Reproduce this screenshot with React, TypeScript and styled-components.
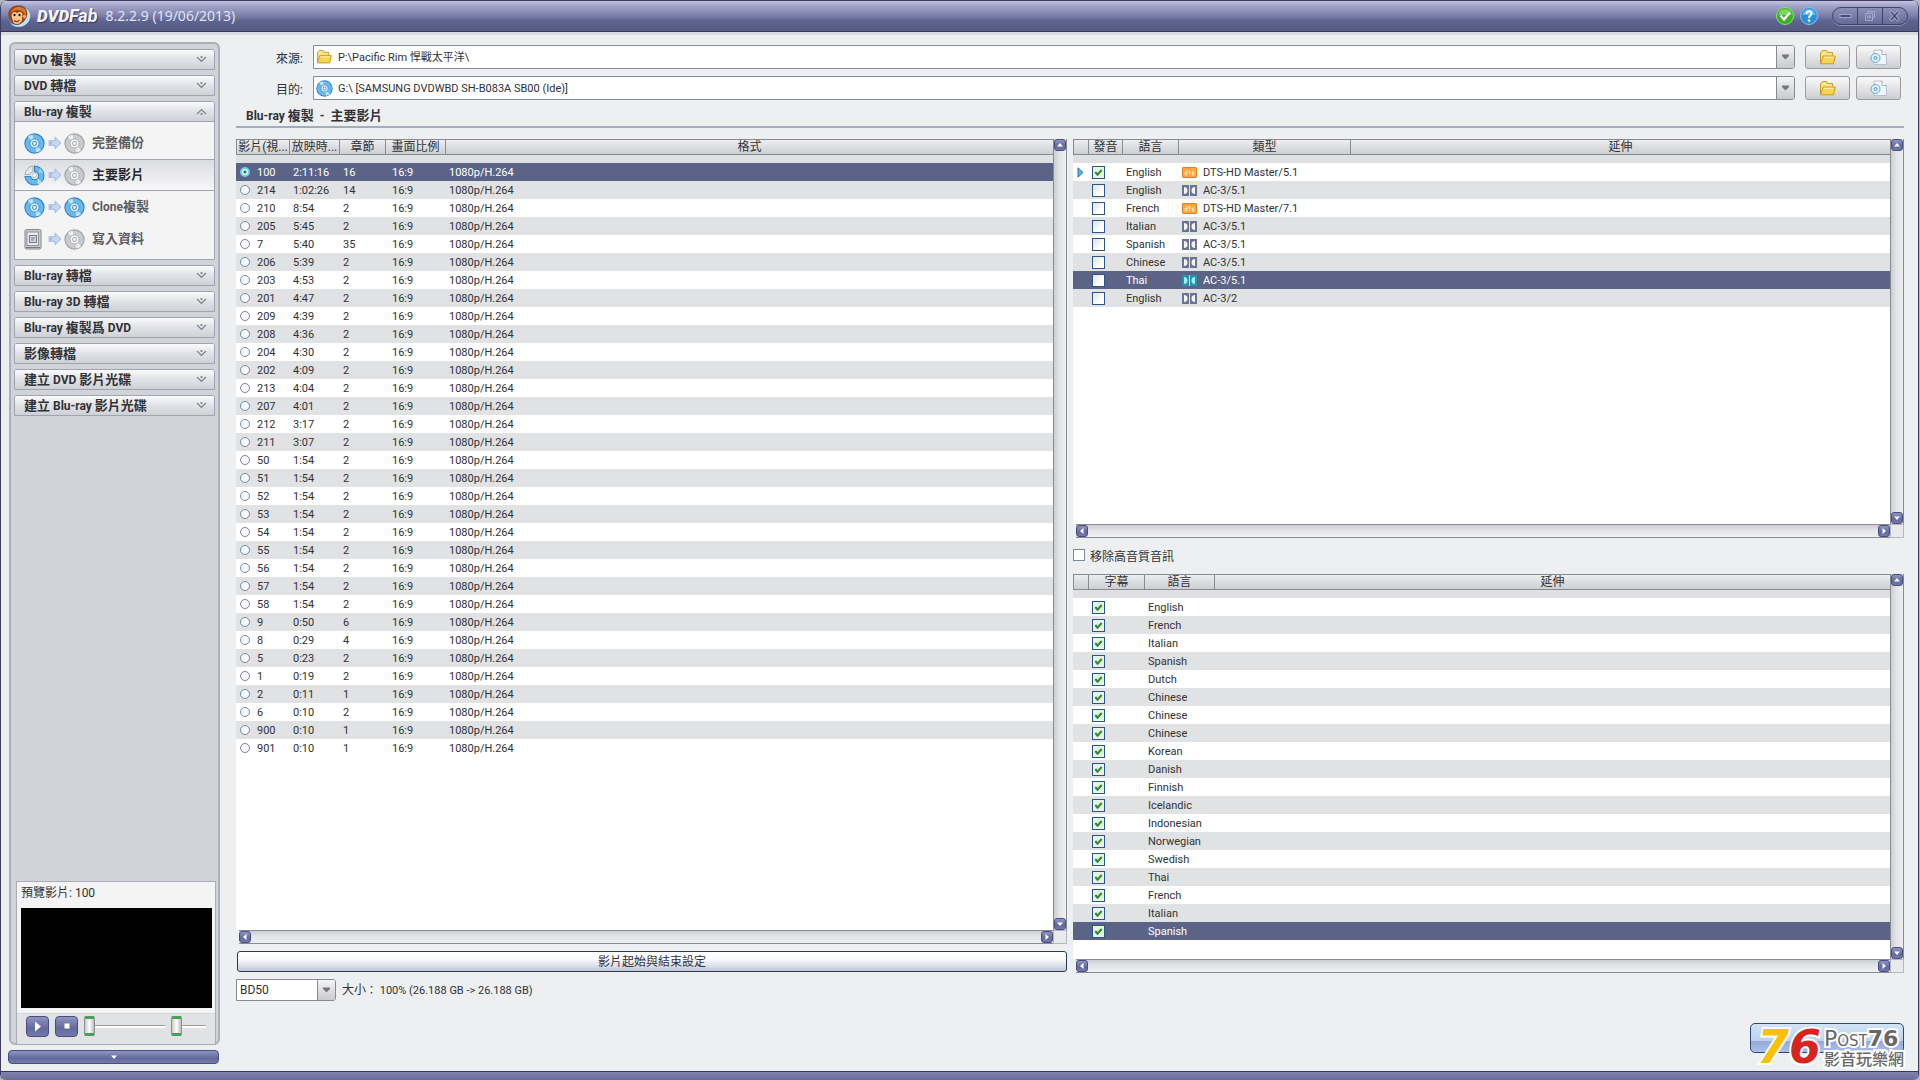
import React, { useState } from 'react';
import styled, { createGlobalStyle, css } from 'styled-components';

const latin = `Roboto, 'Noto Sans CJK TC', sans-serif`;
const line = '#868b92';
const selected = '#5b6487';

const Global = createGlobalStyle`
  *, *::before, *::after { box-sizing: border-box; }
  body { margin: 0; background: #b4b6c4; font-family: ${latin}; font-size: 11px; color: #303236; }
  button, select, input { font: inherit; color: inherit; margin: 0; }
  button { padding: 0; cursor: pointer; }
`;

const Window = styled.div`
  min-height: 100vh;
  margin-right: 1px;
  display: flex;
  flex-direction: column;
  background: #edeff1;
  border: solid #3c3d60;
  border-width: 0 1px;
  border-radius: 8px 8px 6px 6px;
  overflow: hidden;
`;

/* ---------- title bar ---------- */

const TitleBar = styled.header`
  display: flex;
  align-items: center;
  height: 32px;
  padding: 0 10px 0 6px;
  border-top: 1px solid #3c3d60;
  border-bottom: 1px solid #35375b;
  background: linear-gradient(#c3c3e0 0, #a3a3c9 5px, #7f82ac 14px, #5d6390 20px, #555c83 28px, #595e88 31px);
`;

const Brand = styled.div`
  display: flex;
  align-items: baseline;
  margin-left: 6px;
  color: #f4f5fb;
  font: italic 900 17px/24px Roboto, sans-serif;
  text-shadow: 1px 1px 1px #30355c;
`;

const BrandTail = styled.span`
  font-size: 18px;
  font-weight: 700;
`;

const Version = styled.span`
  flex: 1;
  margin-left: 8px;
  color: #dfe4f8;
  font: 14px/24px 'Noto Sans', sans-serif;
`;

const RoundButton = styled.button`
  display: flex;
  width: 18px;
  height: 18px;
  margin-right: 6px;
  border: 0;
  background: none;
`;

const WindowButtons = styled.div`
  display: flex;
  width: 76px;
  height: 18px;
  margin-left: 8px;
  border: 1px solid #3d4370;
  border-radius: 9px;
  overflow: hidden;
  background: linear-gradient(#8d90b6, #656b96);
  box-shadow: 0 1px 0 #8b90b8;
`;

const WindowButton = styled.button`
  flex: 1;
  display: grid;
  place-items: center;
  border: 0;
  background: none;
  & + & { border-left: 1px solid #3d4370; }
`;

/* ---------- sidebar ---------- */

const Body = styled.div`
  flex: 1;
  display: flex;
  gap: 16px;
  padding: 0 14px 0 8px;
  border-top: 3px solid #d9dbe0;
`;

const Aside = styled.aside`
  display: flex;
  flex-direction: column;
  width: 211px;
  padding: 7px 0;
`;

const SidePanel = styled.nav`
  flex: 1;
  display: flex;
  flex-direction: column;
  gap: 5px;
  padding: 5px 2px 0 3px;
  background: #d0d4d8;
  border: 2px solid #abb1b7;
  border-radius: 6px;
`;

const Section = styled.section`
  border: 1px solid #9ea5b0;
  border-radius: 3px 3px 0 0;
  background: #f4f4f5;
  margin-right: 1px;
`;

const SectionHeader = styled.button<{ $open?: boolean }>`
  display: flex;
  align-items: center;
  justify-content: space-between;
  width: 100%;
  height: ${p => (p.$open ? 20 : 19)}px;
  padding: 0 7px 0 9px;
  border: 0;
  border-bottom: ${p => (p.$open ? '1px solid #9ea5b0' : '0')};
  border-radius: 2px 2px 0 0;
  background: linear-gradient(#fbfbfc, #e3e4e8 45%, #cfd1d7);
  font-weight: bold;
  font-size: 12px;
  line-height: 18px;
`;

const Cjk = styled.span<{ $size: number }>`
  font-size: ${p => p.$size}px;
`;

const Items = styled.ul`
  margin: 0;
  padding: 5px 0 4px;
  list-style: none;
`;

const Item = styled.button<{ $active?: boolean }>`
  display: flex;
  align-items: center;
  width: 100%;
  height: 32px;
  padding: 0 9px;
  border: solid transparent;
  border-width: 1px 0;
  background: none;
  color: #5a5c60;
  font-weight: bold;
  font-size: 12px;
  line-height: 18px;
  ${p => p.$active && css`
    color: #26282c;
    border-color: #9ea5b0;
    background: linear-gradient(#dcdde1, #f7f7f8);
  `}
  svg { flex: none; }
`;

const ItemText = styled.span`
  margin-left: 7px;
`;

const Preview = styled.section`
  margin: auto 0 -2px 2px;
  border: 1px solid #a9aeb6;
  background: #f4f4f5;
`;

const PreviewTitle = styled.h2`
  margin: 0;
  padding: 2px 4px 5px;
  font-size: 12px;
  font-weight: normal;
  line-height: 19px;
`;

const Screen = styled.div`
  height: 100px;
  margin: 0 3px 5px 4px;
  background: #000;
`;

const Transport = styled.div`
  display: flex;
  align-items: center;
  gap: 6px;
  height: 31px;
  padding: 0 9px 6px;
  border-top: 1px solid #d3d6da;
  background: #e1e2e4;
`;

const blueFace = css`
  border: 1px solid #474d80;
  background: linear-gradient(#8e95c2, #626a9c 60%, #747bab);
`;

const PlayButton = styled.button`
  ${blueFace}
  flex: none;
  display: grid;
  place-items: center;
  width: 23px;
  height: 21px;
  border-radius: 4px;
`;

const Slider = styled.input<{ $w: number }>`
  appearance: none;
  flex: 0 1 ${p => p.$w}px;
  min-width: 0;
  height: 20px;
  background: linear-gradient(#a59c90, #a59c90) 0 9px / 100% 1px no-repeat,
    linear-gradient(#fff, #fff) 0 10px / 100% 2px no-repeat;
  &::-webkit-slider-thumb {
    appearance: none;
    width: 11px;
    height: 20px;
    border: 1px solid #8c9094;
    border-top: 3px solid #46a05c;
    border-bottom: 3px solid #46a05c;
    border-radius: 2px;
    background: linear-gradient(90deg, #c9cacc, #fff 50%, #b9bbbe);
  }
`;

const CollapseBar = styled.button`
  ${blueFace}
  display: grid;
  place-items: center;
  height: 14px;
  margin: 5px 1px 0 -1px;
  border-radius: 4px;
`;

/* ---------- main ---------- */

const Main = styled.main`
  flex: 1;
  min-width: 0;
  display: flex;
  flex-direction: column;
  padding: 10px 0 18px;
`;

const PathRow = styled.div`
  display: flex;
  align-items: center;
  height: 24px;
  margin-bottom: 7px;
  padding-right: 3px;
`;

const PathLabel = styled.label`
  width: 67px;
  margin-right: 10px;
  text-align: right;
  font-size: 12px;
`;

const Combo = styled.div<{ $w?: number }>`
  ${p => (p.$w ? css`width: ${p.$w}px; height: 22px;` : css`flex: 1; height: 24px;`)}
  display: grid;
  grid-template-columns: auto 1fr 18px;
  align-items: stretch;
  border: 1px solid ${line};
  border-radius: 0 3px 3px 0;
  background: #fff;
  > svg { grid-area: 1 / 1; align-self: center; margin-left: 2px; pointer-events: none; z-index: 1; }
`;

const Select = styled.select<{ $icon?: boolean }>`
  appearance: none;
  grid-area: 1 / 1 / 2 / 4;
  width: 100%;
  min-width: 0;
  padding: 0 20px 0 ${p => (p.$icon ? 24 : 3)}px;
  border: 0;
  background: none;
  font-size: ${p => (p.$icon ? 11 : 12)}px;
  z-index: 1;
`;

const ComboArrow = styled.span`
  grid-area: 1 / 3;
  display: grid;
  place-items: center;
  border-left: 1px solid ${line};
  border-radius: 0 2px 2px 0;
  background: linear-gradient(#f4f4f5, #c9cacd);
`;

const ToolButton = styled.button`
  display: grid;
  place-items: center;
  width: 45px;
  height: 24px;
  margin-left: 6px;
  border: 1px solid #989ba0;
  border-radius: 3px;
  background: linear-gradient(#fafafa, #e4e4e6 50%, #cdced1);
  ${Combo} + & { margin-left: 10px; }
`;

const Heading = styled.h1`
  margin: -2px 0 11px;
  padding-left: 10px;
  height: 23px;
  border-bottom: 2px solid #9fadbd;
  font-size: 12px;
  line-height: 21px;
  white-space: pre;
`;

const Lists = styled.div`
  flex: 1;
  display: grid;
  grid-template-columns: 1fr 1fr;
  gap: 6px;
`;

const Column = styled.div`
  display: flex;
  flex-direction: column;
  min-width: 0;
`;

const Panel = styled.div`
  flex: 1 1 0;
  display: grid;
  grid-template: minmax(min-content, 1fr) 14px / minmax(0, 1fr) 14px;
`;

const Sheet = styled.div`
  background: #fff;
`;

const VBar = styled.div`
  display: flex;
  flex-direction: column;
  justify-content: space-between;
  border: solid ${line};
  border-width: 0 1px;
  background: linear-gradient(90deg, #cdced3, #e3e4e7 45%, #f0f0f2);
`;

const HBar = styled.div`
  display: flex;
  justify-content: space-between;
  margin-left: 3px;
  border: solid ${line};
  border-width: 1px 0;
  background: linear-gradient(#cdced3, #e3e4e7 45%, #f0f0f2);
`;

const Corner = styled.div`
  border: 1px solid #b5b8be;
  background: #e9eaed;
`;

const ScrollButton = styled.button`
  ${blueFace}
  flex: none;
  display: grid;
  place-items: center;
  width: 12px;
  height: 12px;
  border-radius: 3px;
`;

const Table = styled.table`
  width: 100%;
  table-layout: fixed;
  border-collapse: separate;
  border-spacing: 0;
  line-height: 16px;
`;

const Th = styled.th`
  height: 16px;
  padding: 0 1px;
  white-space: nowrap;
  border: solid ${line};
  border-width: 1px 1px 1px 0;
  background: linear-gradient(#efeff1, #dcdde0 50%, #cfd0d4);
  font-size: 12px;
  font-weight: normal;
  line-height: 14px;
  &:first-child { border-left-width: 1px; }
  &:last-child { border-right-width: 0; }
`;

const Gap = styled.td`
  height: 8px;
  padding: 0;
  background: #dfe0e3;
`;

const Row = styled.tr<{ $on?: boolean }>`
  height: 18px;
  &:nth-child(even) { background: #e1e2e3; }
  ${p => p.$on && css`&&& { background: ${selected}; color: #fff; }`}
`;

const Td = styled.td`
  height: 18px;
  padding: 2px 0 0 3px;
  white-space: nowrap;
`;

const RatioTd = styled(Td)`
  padding-left: 6px;
`;

const Flex = styled.span`
  display: flex;
  align-items: center;
  height: 16px;
  > svg, > input { margin-bottom: 2px; }
`;

const Radio = styled.input`
  appearance: none;
  flex: none;
  width: 10px;
  height: 10px;
  margin: 0 7px 0 1px;
  border: 1px solid #76879a;
  border-radius: 50%;
  background: #f8fcff;
  &:checked {
    border: 2px solid #62d3e8;
    background: radial-gradient(#37657f 0 1px, #e4fbff 2px);
  }
`;

const tick = `url("data:image/svg+xml,%3Csvg xmlns='http://www.w3.org/2000/svg' viewBox='0 0 11 11'%3E%3Cpath d='M2.3 5l2.2 2.600L8.700 3' fill='none' stroke='%232f8a2a' stroke-width='2.1'/%3E%3C/svg%3E")`;

const Check = styled.input<{ $soft?: boolean }>`
  appearance: none;
  display: block;
  flex: none;
  width: ${p => (p.$soft ? 12 : 13)}px;
  height: ${p => (p.$soft ? 12 : 13)}px;
  border: 1px solid ${p => (p.$soft ? '#7c899a' : '#2c5486')};
  background: ${p => (p.$soft ? '#fff' : 'linear-gradient(135deg, #dfe3e4, #fff 70%)')};
  &:checked { background: ${tick}, #e6f6e6; }
  ${Td} > & { margin-bottom: 1px; }
`;

const KindText = styled.span`
  margin-left: 6px;
`;

const Strip = styled.label`
  display: flex;
  align-items: center;
  gap: 5px;
  height: 36px;
  padding-bottom: 2px;
  font-size: 12px;
`;

const RangeButton = styled.button`
  height: 21px;
  margin: 7px 0 1px 1px;
  border: 1px solid #2b3a52;
  border-radius: 3px;
  background: linear-gradient(#fff 0, #fbfbfe 35%, #e4e5f0 65%, #c0c6de);
  font-size: 12px;
  line-height: 18px;
`;

const Footer = styled.footer`
  display: flex;
  align-items: flex-start;
  gap: 6px;
  height: 74px;
  margin-top: 6px;
`;

const Size = styled.span`
  flex: 1;
  line-height: 22px;
`;

const StartWrap = styled.div`
  position: relative;
  align-self: flex-end;
`;

const Start = styled.button`
  display: block;
  width: 154px;
  height: 30px;
  border: 1px solid #27497f;
  border-radius: 5px;
  background: linear-gradient(#d2e3f5 0, #bcd2ee 60%, #97a9d8 62%, #a9c0e6);
`;

const Stamp = styled.div`
  position: absolute;
  right: 0;
  top: 5px;
  display: flex;
  align-items: flex-start;
  gap: 3px;
  pointer-events: none;
  white-space: nowrap;
`;

const outline = css`
  -webkit-text-stroke: 4px #fff;
  paint-order: stroke fill;
`;

const Digits = styled.div`
  ${outline}
  color: #d9231f;
  font: italic bold 46px/38px 'DejaVu Sans', sans-serif;
`;

const Gold = styled.span`
  color: #fbc000;
`;

const StampWords = styled.div`
  ${outline}
  color: #686868;
  font: 22px/21px 'DejaVu Sans', sans-serif;
  font-variant: small-caps;
`;

const StampCjk = styled.div`
  font: 500 16px/18px 'Noto Sans CJK TC', sans-serif;
`;

const BottomBar = styled.div`
  height: 9px;
  border-top: 1px solid #35375b;
  background: linear-gradient(#8083ad, #666b98);
`;

/* ---------- drawings ---------- */

const Monkey = () => (
  <svg width="24" height="24" viewBox="0 0 24 24" aria-hidden="true">
    <circle cx="12" cy="12" r="11" fill="#3f9fdc" />
    <path d="M3 19c5 3 13 2 16-5 1.500-3.500 1-7-.5-10C22 6 24 10 23 14c-2 9-14 12-20 5z" fill="#b9e4fb" />
    <path d="M5 19C1 16 0 9 3 5s11-5 15-1 2 9 0 12-6 5-8 5-4-1-5-2z" fill="#9c4418" />
    <path d="M3.500 9C5 3 13 1 17.500 5c2 2 1.500 5 1 7-1-4-4-6-8-6-3 0-5 1-7 3z" fill="#e0782a" />
    <path d="M5 10c1.500-3 4-2 5-.5 1.500-2 5-2 5.500.5.3 2-.8 3-.5 5s-2 5-5 5-4.500-2-4.500-5C5 13 4 12 5 10z" fill="#f6c791" />
    <ellipse cx="7.500" cy="11" rx="1.100" ry="1.300" fill="#27140c" />
    <ellipse cx="12.500" cy="11" rx="1.100" ry="1.300" fill="#27140c" />
    <path d="M7 16.500c2 1.800 4 1.500 5.500-.3" stroke="#8e3418" strokeWidth="1.200" fill="none" />
    <circle cx="17.500" cy="12.500" r="2" fill="#f3b274" stroke="#9c4418" strokeWidth=".6" />
  </svg>
);

const Disc = ({ blue, size = 21 }: { blue?: boolean; size?: number }) => {
  const [edge, base, glow] = blue ? ['#3b86c4', '#67b9f2', '#d6eefd'] : ['#a3a5a8', '#c9cbcd', '#f7f7f8'];
  return (
    <svg width={size} height={size} viewBox="0 0 22 22" aria-hidden="true">
      <circle cx="11" cy="11" r="10" fill={base} stroke={edge} strokeWidth="1.300" />
      <path d="M11 11L4 4A10 10 0 0 1 9 1.500z" fill={glow} opacity=".8" />
      <path d="M11 11L18 18A10 10 0 0 1 13 20.500z" fill={glow} opacity=".8" />
      <circle cx="11" cy="11" r="4.800" fill={glow} stroke={edge} strokeWidth=".9" />
      <circle cx="11" cy="11" r="2" fill="#fff" stroke={edge} strokeWidth="1.100" />
    </svg>
  );
};

const PartDisc = () => (
  <svg width="21" height="21" viewBox="0 0 22 22" aria-hidden="true">
    <path d="M11 1A10 10 0 1 1 1 12L7 12A4.200 4.200 0 1 0 11 7z" fill="#67b9f2" stroke="#3b86c4" strokeWidth="1.200" />
    <path d="M14 14L19 18A10 10 0 0 1 14.500 20.500z" fill="#d6eefd" opacity=".8" />
    <path d="M14.500 8L17 3.500A10 10 0 0 1 20 8z" fill="#a9daf8" opacity=".8" />
    <path d="M9.500 1V6.500A4.500 4.500 0 0 0 6.500 10H1A10 10 0 0 1 9.500 1z" fill="#e6e7e9" stroke="#a0a4a9" strokeWidth=".9" />
    <circle cx="11" cy="11" r="2.200" fill="#fff" stroke="#8fb7d6" strokeWidth=".8" />
  </svg>
);

const Drive = () => (
  <svg width="21" height="21" viewBox="0 0 21 21" aria-hidden="true">
    <rect x="1" y=".5" width="16" height="19.500" rx="1.500" fill="#c9cbcd" stroke="#85888b" />
    <rect x="3" y="3" width="11.500" height="13.500" fill="#e9eaeb" stroke="#8f9295" />
    <rect x="5.500" y="6.500" width="7" height="7" fill="#d3d8e4" stroke="#77797d" />
    <path d="M7 9h4M7 11h3" stroke="#74777c" />
    <path d="M2 18.500h14" stroke="#77797c" />
  </svg>
);

const Arrow = () => (
  <svg width="19" height="14" viewBox="0 0 19 14" aria-hidden="true">
    <path d="M4 4.500h1.500v5H4zM6.500 4.500H10V1l6 6-6 6V9.500H6.500z" fill="#c9d6f3" stroke="#9db2e2" strokeWidth=".8" />
  </svg>
);

const Chevrons = ({ up }: { up?: boolean }) => (
  <svg width="11" height="9" viewBox="0 0 11 9" aria-hidden="true">
    <path
      d={up ? 'M1 7L5.500 2.500 10 7M4.500 7.500L5.500 6.500 6.500 7.500' : 'M1 2L5.500 6.500 10 2M4.500 1.500L5.500 2.500 6.500 1.500'}
      fill="none"
      stroke="#7d828a"
      strokeWidth="1.200"
    />
  </svg>
);

const Folder = ({ size = 17 }: { size?: number }) => (
  <svg width={size} height={size} viewBox="0 0 17 17" aria-hidden="true">
    <path d="M1.500 14.500V4l2-2.500h4l1 2h5v3" fill="#fbe58c" stroke="#c99a24" />
    <path d="M1.500 14.800L4 7h12.300l-1.800 7.800z" fill="#f7d452" stroke="#c99a24" />
    <path d="M5 8.300h9.500" stroke="#fff3b8" />
  </svg>
);

const DiscFile = () => (
  <svg width="18" height="17" viewBox="0 0 18 17" aria-hidden="true">
    <path d="M4 1h8l4.500 4.500V15.500H4z" fill="#f1f4f8" stroke="#b6c1cf" />
    <path d="M12 1v4.500h4.500" fill="#fff" stroke="#a6b2c2" />
    <circle cx="5.500" cy="9" r="4.500" fill="#dff1fb" stroke="#57a9d8" />
    <circle cx="5.500" cy="9" r="1.500" fill="#fff" stroke="#3d93c9" />
  </svg>
);

const Tri = ({ d }: { d: 'u' | 'd' | 'l' | 'r' }) => {
  const paths = { u: 'M1 5.500h6L4 2z', d: 'M1 2.500h6L4 6z', l: 'M5.500 1v6L2 4z', r: 'M2.500 1v6L6 4z' };
  return (
    <svg width="8" height="8" viewBox="0 0 8 8" aria-hidden="true">
      <path d={paths[d]} fill="#fff" />
    </svg>
  );
};

const Drop = () => (
  <svg width="9" height="6" viewBox="0 0 9 6" aria-hidden="true">
    <path d="M1 .5h7v1.500L4.500 5.500 1 2z" fill="#74777c" />
  </svg>
);

const DtsIcon = () => (
  <svg width="15" height="11" viewBox="0 0 15 11" aria-hidden="true">
    <rect x=".5" y=".5" width="14" height="10" rx=".5" fill="#f6a843" stroke="#df8420" />
    <path d="M3 5.500h2M5 3v5H3V5.500M7.500 3v5M6.500 5H9M12.500 5H10v1.500h2V8H9.800" stroke="#ffe9b0" strokeWidth=".9" fill="none" />
  </svg>
);

const DolbyIcon = ({ on }: { on?: boolean }) => (
  <svg width="15" height="11" viewBox="0 0 15 11" aria-hidden="true">
    {!on && <path d="M0 0h7v11H0zM8 0h7v11H8z" fill="#6c7590" />}
    {on && <path d="M0 0h15v11H0z" fill="#2f8fa8" />}
    <path
      d="M2 2C4.500 2 5.500 3.500 5.500 5.500S4.500 9 2 9zM13 2C10.500 2 9.500 3.500 9.500 5.500s1 3.500 3.500 3.500z"
      fill={on ? '#8ff4f2' : '#f2f4fa'}
    />
    {on && <path d="M7.500 0v11" stroke="#8ff4f2" />}
  </svg>
);

/* ---------- data ---------- */

const titles: [string, string, number][] = [
  ['100', '2:11:16', 16], ['214', '1:02:26', 14], ['210', '8:54', 2], ['205', '5:45', 2], ['7', '5:40', 35],
  ['206', '5:39', 2], ['203', '4:53', 2], ['201', '4:47', 2], ['209', '4:39', 2], ['208', '4:36', 2],
  ['204', '4:30', 2], ['202', '4:09', 2], ['213', '4:04', 2], ['207', '4:01', 2], ['212', '3:17', 2],
  ['211', '3:07', 2], ['50', '1:54', 2], ['51', '1:54', 2], ['52', '1:54', 2], ['53', '1:54', 2],
  ['54', '1:54', 2], ['55', '1:54', 2], ['56', '1:54', 2], ['57', '1:54', 2], ['58', '1:54', 2],
  ['9', '0:50', 6], ['8', '0:29', 4], ['5', '0:23', 2], ['1', '0:19', 2], ['2', '0:11', 1],
  ['6', '0:10', 2], ['900', '0:10', 1], ['901', '0:10', 1],
];

const audio: [string, string][] = [
  ['English', 'DTS-HD Master/5.1'], ['English', 'AC-3/5.1'], ['French', 'DTS-HD Master/7.1'], ['Italian', 'AC-3/5.1'],
  ['Spanish', 'AC-3/5.1'], ['Chinese', 'AC-3/5.1'], ['Thai', 'AC-3/5.1'], ['English', 'AC-3/2'],
];

const subtitles = [
  'English', 'French', 'Italian', 'Spanish', 'Dutch', 'Chinese', 'Chinese', 'Chinese', 'Korean', 'Danish',
  'Finnish', 'Icelandic', 'Indonesian', 'Norwegian', 'Swedish', 'Thai', 'French', 'Italian', 'Spanish',
];

/* Ideographs are set one size larger than the Latin letters beside them. */
const Mixed = ({ text, size = 13 }: { text: string; size?: number }) => (
  <span>
    {text.split(/([\u3000-\u9fff]+)/).map((part, i) => (i % 2 ? <Cjk key={i} $size={size}>{part}</Cjk> : part))}
  </span>
);

const Group = ({ title }: { title: string }) => (
  <Section>
    <SectionHeader><Mixed text={title} /><Chevrons /></SectionHeader>
  </Section>
);

const ScrollPanel = ({ children }: { children: React.ReactNode }) => (
  <Panel>
    <Sheet>{children}</Sheet>
    <VBar>
      <ScrollButton aria-label="上"><Tri d="u" /></ScrollButton>
      <ScrollButton aria-label="下"><Tri d="d" /></ScrollButton>
    </VBar>
    <HBar>
      <ScrollButton aria-label="左"><Tri d="l" /></ScrollButton>
      <ScrollButton aria-label="右"><Tri d="r" /></ScrollButton>
    </HBar>
    <Corner />
  </Panel>
);

const Head = ({ widths, names }: { widths: number[]; names: string[] }) => (
  <>
    <colgroup>
      {names.map((_, i) => <col key={i} style={widths[i] ? { width: widths[i] } : undefined} />)}
    </colgroup>
    <thead>
      <tr>{names.map((n, i) => <Th key={i} scope="col">{n}</Th>)}</tr>
      <tr aria-hidden="true"><Gap colSpan={names.length} /></tr>
    </thead>
  </>
);

const PathLine = ({ id, label, value, icon }: { id: string; label: string; value: string; icon: React.ReactNode }) => (
  <PathRow>
    <PathLabel htmlFor={id}>{label}</PathLabel>
    <Combo>
      {icon}
      <Select id={id} $icon><option>{value}</option></Select>
      <ComboArrow><Drop /></ComboArrow>
    </Combo>
    <ToolButton aria-label="資料夾"><Folder /></ToolButton>
    <ToolButton aria-label="映像檔"><DiscFile /></ToolButton>
  </PathRow>
);

export default function App() {
  const [title, setTitle] = useState('100');

  return (
    <>
      <Global />
      <Window>
        <TitleBar>
          <Monkey />
          <Brand>DVD<BrandTail>Fab</BrandTail></Brand>
          <Version>8.2.2.9 (19/06/2013)</Version>
          <RoundButton aria-label="檢查">
            <svg width="18" height="18" viewBox="0 0 18 18">
              <circle cx="9" cy="9" r="8.500" fill="#3fae27" stroke="#8fdf78" />
              <path d="M2.500 8a6.500 6 0 0 1 13 0z" fill="#7fd564" />
              <path d="M4.500 8.500l3.500 4 6-7" fill="none" stroke="#fff" strokeWidth="2.400" />
            </svg>
          </RoundButton>
          <RoundButton aria-label="說明">
            <svg width="18" height="18" viewBox="0 0 18 18">
              <circle cx="9" cy="9" r="8.500" fill="#2c8fd6" stroke="#7cc8f4" />
              <path d="M2.500 8a6.500 6 0 0 1 13 0z" fill="#63b8ee" />
              <path d="M6.500 7c0-3.500 5-3.500 5-.5C11.500 8.500 9 8.500 9 11" fill="none" stroke="#fff" strokeWidth="2" />
              <circle cx="9" cy="13.500" r="1.300" fill="#fff" />
            </svg>
          </RoundButton>
          <WindowButtons>
            <WindowButton aria-label="最小化">
              <svg width="14" height="12" viewBox="0 0 14 12"><rect x="2" y="4.500" width="11" height="3" fill="#454b78" stroke="#a4a8cc" /></svg>
            </WindowButton>
            <WindowButton aria-label="還原">
              <svg width="14" height="12" viewBox="0 0 14 12"><path d="M4.500 3V1.500h7v6H10M2.500 3.500h7v7h-7zM4.500 6h3v2h-3z" fill="none" stroke="#a4a8cc" /></svg>
            </WindowButton>
            <WindowButton aria-label="關閉">
              <svg width="14" height="12" viewBox="0 0 14 12">
                <path d="M2.500 1.500l8 9M10.500 1.500l-8 9" stroke="#a4a8cc" strokeWidth="3.400" />
                <path d="M3 2l7 8M10 2l-7 8" stroke="#454b78" strokeWidth="1.600" />
              </svg>
            </WindowButton>
          </WindowButtons>
        </TitleBar>

        <Body>
          <Aside>
            <SidePanel>
              <Group title="DVD 複製" />
              <Group title="DVD 轉檔" />
              <Section>
                <SectionHeader $open><Mixed text="Blu-ray 複製" /><Chevrons up /></SectionHeader>
                <Items>
                  <li><Item><Disc blue /><Arrow /><Disc /><ItemText><Mixed text="完整備份" /></ItemText></Item></li>
                  <li><Item $active><PartDisc /><Arrow /><Disc /><ItemText><Mixed text="主要影片" /></ItemText></Item></li>
                  <li><Item><Disc blue /><Arrow /><Disc blue /><ItemText><Mixed text="Clone複製" /></ItemText></Item></li>
                  <li><Item><Drive /><Arrow /><Disc /><ItemText><Mixed text="寫入資料" /></ItemText></Item></li>
                </Items>
              </Section>
              <Group title="Blu-ray 轉檔" />
              <Group title="Blu-ray 3D 轉檔" />
              <Group title="Blu-ray 複製爲 DVD" />
              <Group title="影像轉檔" />
              <Group title="建立 DVD 影片光碟" />
              <Group title="建立 Blu-ray 影片光碟" />
              <Preview>
                <PreviewTitle>預覽影片: 100</PreviewTitle>
                <Screen />
                <Transport>
                  <PlayButton aria-label="播放">
                    <svg width="8" height="11" viewBox="0 0 8 11"><path d="M1 .5v10l6-5z" fill="#fff" /></svg>
                  </PlayButton>
                  <PlayButton aria-label="停止">
                    <svg width="6" height="6" viewBox="0 0 6 6"><path d="M.5.500h5v5h-5z" fill="#fff" /></svg>
                  </PlayButton>
                  <Slider type="range" $w={82} defaultValue={0} aria-label="位置" />
                  <Slider type="range" $w={35} defaultValue={0} aria-label="音量" />
                </Transport>
              </Preview>
            </SidePanel>
            <CollapseBar aria-label="收合"><Tri d="d" /></CollapseBar>
          </Aside>

          <Main>
            <PathLine id="source" label="來源:" value="P:\Pacific Rim 悍戰太平洋\" icon={<Folder size={16} />} />
            <PathLine id="target" label="目的:" value="G:\ [SAMSUNG DVDWBD SH-B083A SB00 (Ide)]" icon={<Disc blue size={17} />} />
            <Heading><Mixed text="Blu-ray 複製  -  主要影片" /></Heading>

            <Lists>
              <Column>
                <ScrollPanel>
                  <Table>
                    <Head widths={[54, 50, 46, 60]} names={['影片(視...', '放映時...', '章節', '畫面比例', '格式']} />
                    <tbody>
                      {titles.map(([n, time, chapters]) => (
                        <Row key={n} $on={n === title}>
                          <Td>
                            <Flex>
                              <Radio type="radio" name="title" id={`t${n}`} checked={n === title} onChange={() => setTitle(n)} />
                              <label htmlFor={`t${n}`}>{n}</label>
                            </Flex>
                          </Td>
                          <Td>{time}</Td>
                          <Td>{chapters}</Td>
                          <RatioTd>16:9</RatioTd>
                          <Td>1080p/H.264</Td>
                        </Row>
                      ))}
                    </tbody>
                  </Table>
                </ScrollPanel>
                <RangeButton>影片起始與結束設定</RangeButton>
              </Column>

              <Column>
                <ScrollPanel>
                  <Table>
                    <Head widths={[16, 34, 56, 172]} names={['', '發音', '語言', '類型', '延伸']} />
                    <tbody>
                      {audio.map(([lang, kind], i) => (
                        <Row key={i} $on={i === 6}>
                          <Td>
                            {i === 0 && (
                              <Flex>
                                <svg width="9" height="11" viewBox="0 0 9 11" aria-hidden="true">
                                  <path d="M2 .8v9.400L7 5.500z" fill="#5fb6ea" stroke="#2b6fae" />
                                </svg>
                              </Flex>
                            )}
                          </Td>
                          <Td><Check type="checkbox" defaultChecked={i === 0} id={`a${i}`} /></Td>
                          <Td><label htmlFor={`a${i}`}>{lang}</label></Td>
                          <Td>
                            <Flex>
                              {kind.startsWith('DTS') ? <DtsIcon /> : <DolbyIcon on={i === 6} />}
                              <KindText>{kind}</KindText>
                            </Flex>
                          </Td>
                          <Td />
                        </Row>
                      ))}
                    </tbody>
                  </Table>
                </ScrollPanel>
                <Strip><Check type="checkbox" $soft />移除高音質音訊</Strip>
                <ScrollPanel>
                  <Table>
                    <Head widths={[16, 56, 70]} names={['', '字幕', '語言', '延伸']} />
                    <tbody>
                      {subtitles.map((lang, i) => (
                        <Row key={i} $on={i === 18}>
                          <Td />
                          <Td><Check type="checkbox" defaultChecked id={`s${i}`} /></Td>
                          <Td><label htmlFor={`s${i}`}>{lang}</label></Td>
                          <Td />
                        </Row>
                      ))}
                    </tbody>
                  </Table>
                </ScrollPanel>
              </Column>
            </Lists>

            <Footer>
              <Combo $w={100}>
                <Select aria-label="光碟類型"><option>BD50</option></Select>
                <ComboArrow><Drop /></ComboArrow>
              </Combo>
              <Size><Mixed size={12} text="大小： 100% (26.188 GB -> 26.188 GB)" /></Size>
              <StartWrap>
                <Start aria-label="開始" />
                <Stamp>
                  <Digits><Gold>7</Gold>6</Digits>
                  <StampWords>
                    Post<b>76</b>
                    <StampCjk>影音玩樂網</StampCjk>
                  </StampWords>
                </Stamp>
              </StartWrap>
            </Footer>
          </Main>
        </Body>
        <BottomBar />
      </Window>
    </>
  );
}
